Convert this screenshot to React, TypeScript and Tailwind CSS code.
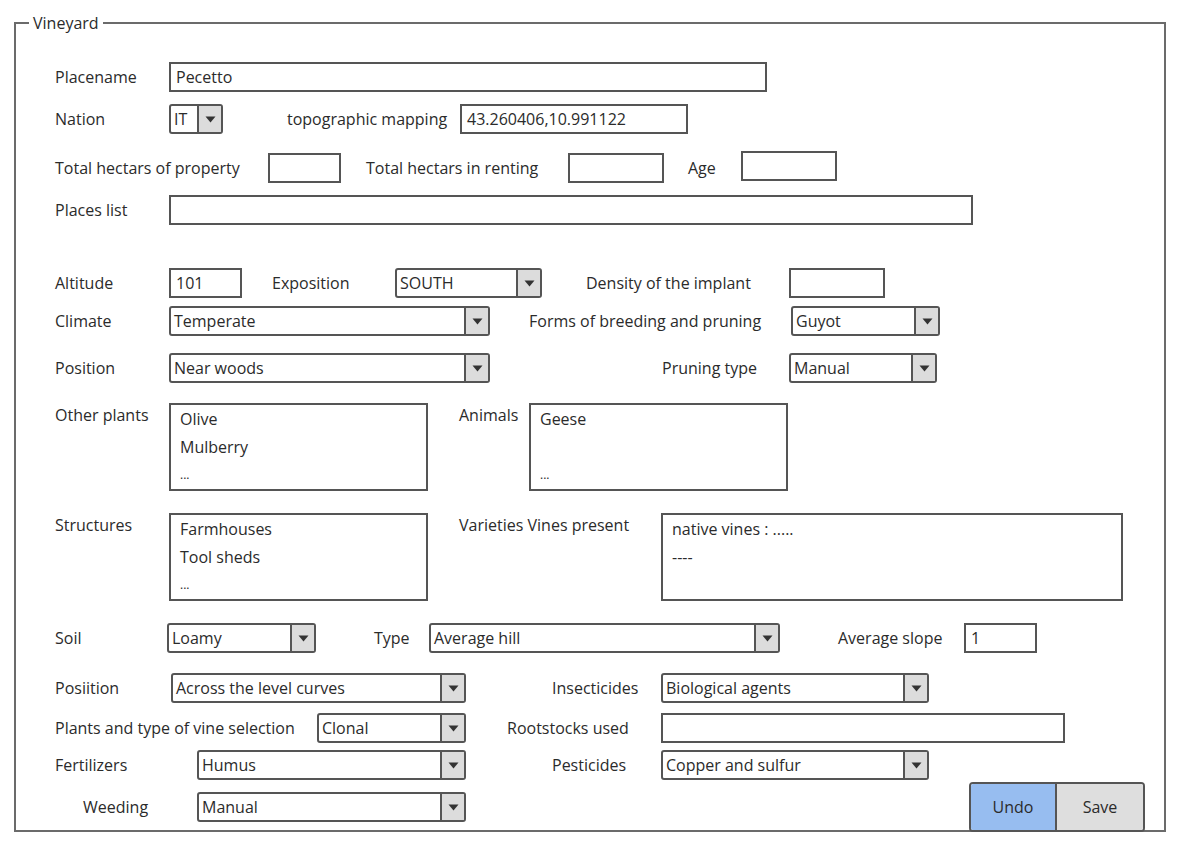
import React from "react";

const txt = "text-[16px] text-[#2b2b2b] leading-[20px] whitespace-nowrap";

function Label({ w, ml = 0, children, top = false }: { w: number; ml?: number; children: React.ReactNode; top?: boolean }) {
  return (
    <div
      className={`${txt} shrink-0 ${top ? "self-start pt-[2px]" : ""}`}
      style={{ width: w, marginLeft: ml }}
    >
      {children}
    </div>
  );
}

function TextBox({ w, value = "", className = "" }: { w: number; value?: string; className?: string }) {
  return (
    <div
      className={`h-[30px] shrink-0 border-2 border-[#555] bg-white pl-[5px] flex items-center ${txt} ${className}`}
      style={{ width: w }}
    >
      {value}
    </div>
  );
}

function Select({ w, value, ml = 0 }: { w: number; value: string; ml?: number }) {
  return (
    <div
      className="h-[30px] shrink-0 flex border-2 border-[#555] rounded-[3px] bg-white overflow-hidden"
      style={{ width: w, marginLeft: ml }}
    >
      <div className={`flex-1 flex items-center pl-[3px] ${txt}`}>{value}</div>
      <div className="w-[24px] border-l-2 border-[#555] bg-[#dcdcdc] flex items-center justify-center">
        <svg width="11" height="7" viewBox="0 0 11 7">
          <path d="M0.5 0.5 L10.5 0.5 L5.5 6.5 Z" fill="#333" />
        </svg>
      </div>
    </div>
  );
}

function ListBox({ w, lines }: { w: number; lines: string[] }) {
  return (
    <div className="h-[88px] shrink-0 border-2 border-[#555] bg-white pl-[9px]" style={{ width: w }}>
      {lines.map((l, i) => (
        <div
          key={i}
          className={`leading-[28px] text-[#2b2b2b] whitespace-nowrap ${l === "..." ? "text-[12px]" : "text-[16px]"}`}
        >
          {l === "" ? "\u00a0" : l}
        </div>
      ))}
    </div>
  );
}

function Row({ mt, children, className = "items-center" }: { mt: number; children: React.ReactNode; className?: string }) {
  return (
    <div className={`flex ${className}`} style={{ marginTop: mt }}>
      {children}
    </div>
  );
}

export default function App() {
  return (
    <div className="w-[1200px] h-[848px] bg-white pt-[13px] font-['Open_Sans','Liberation_Sans',sans-serif]">
      <fieldset className="ml-[14px] w-[1152px] h-[819px] border-2 border-[#6b6b6b] p-0">
        <legend className="ml-[13px] px-[4px] text-[16px] leading-[20px] text-[#2b2b2b]">Vineyard</legend>
        <div className="pl-[39px] pt-[29px]">
          <Row mt={0}>
            <Label w={114}>Placename</Label>
            <TextBox w={598} value="Pecetto" />
          </Row>

          <Row mt={12}>
            <Label w={114}>Nation</Label>
            <Select w={54} value="IT" />
            <Label w={173} ml={64}>topographic mapping</Label>
            <TextBox w={228} value="43.260406,10.991122" />
          </Row>

          <Row mt={19} className="items-center h-[30px]">
            <Label w={213}>Total hectars of property</Label>
            <TextBox w={73} />
            <Label w={202} ml={25}>Total hectars in renting</Label>
            <TextBox w={96} />
            <Label w={53} ml={24}>Age</Label>
            <TextBox w={96} className="self-start -mt-[2px]" />
          </Row>

          <Row mt={12}>
            <Label w={114}>Places list</Label>
            <TextBox w={804} />
          </Row>

          <Row mt={43}>
            <Label w={114}>Altitude</Label>
            <TextBox w={73} value="101" />
            <Label w={123} ml={30}>Exposition</Label>
            <Select w={147} value="SOUTH" />
            <Label w={203} ml={44}>Density of the implant</Label>
            <TextBox w={96} />
          </Row>

          <Row mt={8}>
            <Label w={114}>Climate</Label>
            <Select w={321} value="Temperate" />
            <Label w={262} ml={39}>Forms of breeding and pruning</Label>
            <Select w={149} value="Guyot" />
          </Row>

          <Row mt={17}>
            <Label w={114}>Position</Label>
            <Select w={321} value="Near woods" />
            <Label w={127} ml={172}>Pruning type</Label>
            <Select w={148} value="Manual" />
          </Row>

          <Row mt={20} className="items-start">
            <Label w={114} top>Other plants</Label>
            <ListBox w={259} lines={["Olive", "Mulberry", "..."]} />
            <Label w={70} ml={31} top>Animals</Label>
            <ListBox w={259} lines={["Geese", "", "..."]} />
          </Row>

          <Row mt={22} className="items-start">
            <Label w={114} top>Structures</Label>
            <ListBox w={259} lines={["Farmhouses", "Tool sheds", "..."]} />
            <Label w={202} ml={31} top>Varieties Vines present</Label>
            <ListBox w={462} lines={["native vines : .....", "----"]} />
          </Row>

          <Row mt={22}>
            <Label w={112}>Soil</Label>
            <Select w={149} value="Loamy" />
            <Label w={55} ml={58}>Type</Label>
            <Select w={351} value="Average hill" />
            <Label w={126} ml={58}>Average slope</Label>
            <TextBox w={73} value="1" />
          </Row>

          <Row mt={20}>
            <Label w={116}>Posiition</Label>
            <Select w={295} value="Across the level curves" />
            <Label w={109} ml={86}>Insecticides</Label>
            <Select w={268} value="Biological agents" />
          </Row>

          <Row mt={10}>
            <Label w={262}>Plants and type of vine selection</Label>
            <Select w={149} value="Clonal" />
            <Label w={154} ml={41}>Rootstocks used</Label>
            <TextBox w={404} />
          </Row>

          <Row mt={7}>
            <Label w={142}>Fertilizers</Label>
            <Select w={269} value="Humus" />
            <Label w={109} ml={86}>Pesticides</Label>
            <Select w={268} value="Copper and sulfur" />
          </Row>

          <Row mt={2}>
            <Label w={114} ml={28}>Weeding</Label>
            <Select w={269} value="Manual" />
            <div className="ml-[503px] flex h-[50px] border-2 border-[#555] rounded-[4px] overflow-hidden">
              <button className={`w-[86px] bg-[#97bdf0] border-r-2 border-[#555] ${txt}`}>Undo</button>
              <button className={`w-[86px] bg-[#dedede] ${txt}`}>Save</button>
            </div>
          </Row>
        </div>
      </fieldset>
    </div>
  );
}
